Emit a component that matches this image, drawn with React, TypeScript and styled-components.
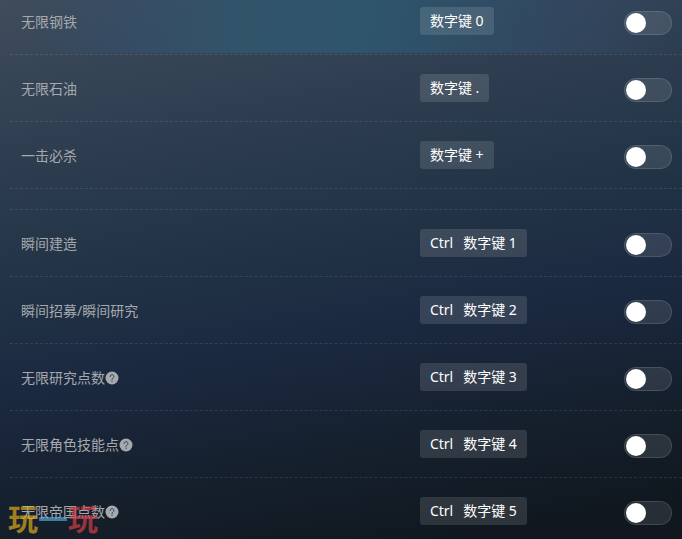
import React, { useId, useState } from "react";
import styled, { createGlobalStyle } from "styled-components";

const GlobalStyle = createGlobalStyle`
  *, *::before, *::after { box-sizing: border-box; }
  html { background: #10171f; }
  body {
    margin: 0;
    font-family: "Noto Sans", "Noto Sans CJK SC", sans-serif;
    font-size: 14px;
  }
`;

const Page = styled.main`
  position: relative;
  height: 100vh;
  overflow: hidden;
  padding-left: 10px;
  background:
    linear-gradient(
        100deg,
        rgba(54, 80, 108, 0) 5%,
        rgba(52, 80, 108, 0.7) 22%,
        rgba(49, 86, 108, 0.9) 36%,
        rgba(46, 86, 110, 0.95) 54%,
        rgba(46, 80, 104, 0.9) 66%,
        rgba(50, 72, 98, 0.8) 82%,
        rgba(48, 62, 82, 0.2) 100%
      )
      top / 100% 53px no-repeat,
    linear-gradient(170deg, #3f4c5c 0%, #2f3f51 22%, #233446 42%, #1b2940 60%, #141e29 82%, #10171f 94%, #10171e 100%);
`;

const Group = styled.ul<{ $continued?: boolean }>`
  list-style: none;
  margin: ${(p) => (p.$continued ? "-12px 0 0" : "20px 0 0")};
  padding: 0;
  border-top: ${(p) => (p.$continued ? "none" : "1px dashed rgba(255, 255, 255, 0.1)")};
`;

const Row = styled.li`
  display: grid;
  grid-template-columns: 61fr 39fr;
  align-items: end;
  padding: 19px 0;
  border-bottom: 1px dashed rgba(255, 255, 255, 0.1);
`;

const Name = styled.div`
  display: flex;
  align-items: center;
  padding-left: 11px;
  line-height: 26px;
  color: #a5a9ae;
`;

const Help = styled.button`
  display: flex;
  padding: 0;
  border: 0;
  background: none;
  color: #a5a9ae;
  cursor: help;
`;

const Controls = styled.div`
  display: flex;
  align-items: flex-end;
  justify-content: space-between;
  padding-right: 10px;
`;

const Hotkey = styled.button`
  display: flex;
  align-items: center;
  gap: 10px;
  height: 28px;
  padding: 0 10px;
  border: 0;
  border-radius: 3px;
  background: rgba(255, 255, 255, 0.12);
  color: #fff;
  font: inherit;
  line-height: 28px;
  white-space: nowrap;
`;

const Switch = styled.input`
  appearance: none;
  display: flex;
  align-items: center;
  width: 48px;
  height: 24px;
  margin: 0;
  padding: 0 1px;
  border: 1px solid rgba(255, 255, 255, 0.12);
  border-radius: 12px;
  background: rgba(255, 255, 255, 0.1);
  cursor: pointer;

  &::before {
    content: "";
    width: 20px;
    height: 20px;
    border-radius: 50%;
    background: #fff;
  }

  &:checked {
    justify-content: flex-end;
    background: #2d7fa6;
  }
`;

const Watermark = styled.div`
  position: absolute;
  left: 8px;
  bottom: 0;
  display: flex;
  font-family: "Noto Sans CJK SC", sans-serif;
  font-size: 30px;
  font-weight: 700;
  line-height: 44px;
  opacity: 0.65;
  pointer-events: none;
`;

const Mark = styled.span<{ $color: string }>`
  color: ${(p) => p.$color};
`;

type Cheat = { name: string; keys: string[]; help?: boolean };

const resources: Cheat[] = [
  { name: "无限钢铁", keys: ["数字键 0"] },
  { name: "无限石油", keys: ["数字键 ."] },
  { name: "一击必杀", keys: ["数字键 +"] },
];

const progress: Cheat[] = [
  { name: "瞬间建造", keys: ["Ctrl", "数字键 1"] },
  { name: "瞬间招募/瞬间研究", keys: ["Ctrl", "数字键 2"] },
  { name: "无限研究点数", keys: ["Ctrl", "数字键 3"], help: true },
  { name: "无限角色技能点", keys: ["Ctrl", "数字键 4"], help: true },
  { name: "无限帝国点数", keys: ["Ctrl", "数字键 5"], help: true },
];

function HelpIcon() {
  return (
    <svg width="14" height="14" viewBox="0 0 14 14" aria-hidden="true">
      <circle cx="7" cy="7" r="6.5" fill="currentColor" />
      <path
        d="M5.1 5.5a1.9 1.9 0 1 1 2.9 1.6c-.7.4-1 .7-1 1.3"
        fill="none"
        stroke="#37424f"
        strokeWidth="1"
        strokeLinecap="round"
      />
      <circle cx="7" cy="10.2" r="0.65" fill="#37424f" />
    </svg>
  );
}

function CheatRow({ name, keys, help }: Cheat) {
  const id = useId();
  const [on, setOn] = useState(false);
  return (
    <Row>
      <Name>
        <label htmlFor={id}>{name}</label>
        {help && (
          <Help type="button" aria-label={`${name} 说明`}>
            <HelpIcon />
          </Help>
        )}
      </Name>
      <Controls>
        <Hotkey type="button">
          {keys.map((key) => (
            <span key={key}>{key}</span>
          ))}
        </Hotkey>
        <Switch id={id} type="checkbox" checked={on} onChange={(e) => setOn(e.target.checked)} />
      </Controls>
    </Row>
  );
}

export default function App() {
  return (
    <>
      <GlobalStyle />
      <Page>
        <Group $continued>
          {resources.map((cheat) => (
            <CheatRow key={cheat.name} {...cheat} />
          ))}
        </Group>
        <Group>
          {progress.map((cheat) => (
            <CheatRow key={cheat.name} {...cheat} />
          ))}
        </Group>
        <Watermark>
          <Mark $color="#e8b41c">玩</Mark>
          <Mark $color="#5aaee0">一</Mark>
          <Mark $color="#e0414a">玩</Mark>
        </Watermark>
      </Page>
    </>
  );
}
